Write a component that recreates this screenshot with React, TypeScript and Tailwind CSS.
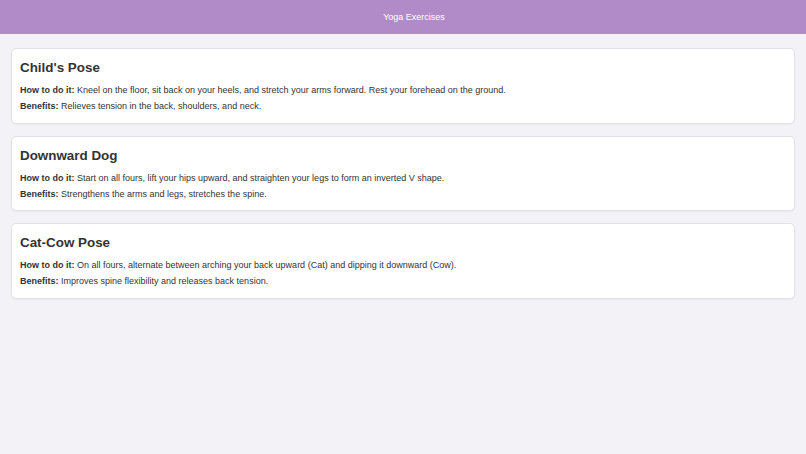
import React from 'react';

const exercises = [
  {
    name: "Child's Pose",
    how: 'Kneel on the floor, sit back on your heels, and stretch your arms forward. Rest your forehead on the ground.',
    benefits: 'Relieves tension in the back, shoulders, and neck.',
  },
  {
    name: 'Downward Dog',
    how: 'Start on all fours, lift your hips upward, and straighten your legs to form an inverted V shape.',
    benefits: 'Strengthens the arms and legs, stretches the spine.',
  },
  {
    name: 'Cat-Cow Pose',
    how: 'On all fours, alternate between arching your back upward (Cat) and dipping it downward (Cow).',
    benefits: 'Improves spine flexibility and releases back tension.',
  },
];

export default function App() {
  return (
    <div
      className="min-h-[454px] bg-[#f3f2f7] text-[#333]"
      style={{ fontFamily: '"Liberation Sans", Arial, sans-serif' }}
    >
      {/* Header */}
      <header className="h-[34px] bg-[#b08bc7] flex items-center justify-center pl-[22px]">
        <h1 className="text-[9px] text-white leading-none">Yoga Exercises</h1>
      </header>

      <main className="px-[11px] pt-[14px] flex flex-col gap-[12px]">
        {exercises.map((ex) => (
          <div
            key={ex.name}
            className="bg-white border border-[#e2e1e8] rounded-[5px] shadow-[0_1px_2px_rgba(0,0,0,0.04)] px-[8px] pt-[11px] pb-[10.5px]"
          >
            <h2 className="text-[13.4px] font-bold leading-[16px] text-[#333]">{ex.name}</h2>
            <p className="mt-[9px] text-[9px] leading-[11px]">
              <strong className="font-bold">How to do it:</strong> {ex.how}
            </p>
            <p className="mt-[5px] text-[9px] leading-[11px]">
              <strong className="font-bold">Benefits:</strong> {ex.benefits}
            </p>
          </div>
        ))}
      </main>
    </div>
  );
}
